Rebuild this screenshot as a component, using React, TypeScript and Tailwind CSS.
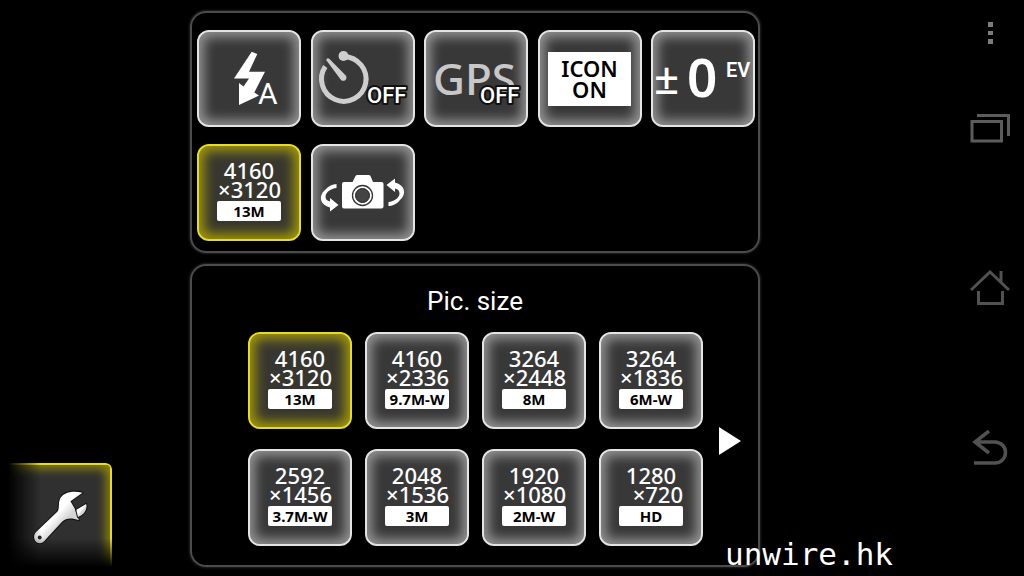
import type { ReactNode } from 'react';
import clsx from 'clsx';

type PicSize = { width: string; height: string; label: string };

const picSizes: PicSize[] = [
  { width: '4160', height: '3120', label: '13M' },
  { width: '4160', height: '2336', label: '9.7M-W' },
  { width: '3264', height: '2448', label: '8M' },
  { width: '3264', height: '1836', label: '6M-W' },
  { width: '2592', height: '1456', label: '3.7M-W' },
  { width: '2048', height: '1536', label: '3M' },
  { width: '1920', height: '1080', label: '2M-W' },
  { width: '1280', height: '720', label: 'HD' },
];

const ROBOTO = 'Roboto, sans-serif';
const SANS = '"Noto Sans", "Open Sans", sans-serif';

const Tile = ({ name, active, children }: { name: string; active?: boolean; children: ReactNode }) => (
  <button
    type="button"
    aria-label={name}
    aria-pressed={!!active}
    className={clsx(
      'flex h-[97px] w-[104px] items-center justify-center rounded-xl border-2',
      active
        ? 'border-[#e6dc28] bg-[#38372f] shadow-[inset_0_0_12px_5px_#a1980a]'
        : 'border-[#e4e4e4] bg-[#383838] shadow-[inset_0_0_12px_5px_#949494]'
    )}
  >
    {children}
  </button>
);

const SizeTile = ({ size, active }: { size: PicSize; active?: boolean }) => (
  <Tile name={`${size.width}×${size.height} ${size.label}`} active={active}>
    <span className="flex w-16 flex-col pb-[3px] font-['Noto_Sans','Open_Sans',sans-serif] text-[22px] leading-[19px] font-medium text-white">
      <span className="text-center">{size.width}</span>
      <span className="flex justify-end">×{size.height}</span>
      <span className="mt-0.5 h-5 rounded-xs bg-white text-center text-[15px] leading-5 font-bold text-black">
        {size.label}
      </span>
    </span>
  </Tile>
);

const OffText = () => (
  <text
    x="54"
    y="71"
    fill="#fff"
    stroke="#111"
    strokeWidth="4"
    strokeLinejoin="round"
    paintOrder="stroke"
    fontFamily={ROBOTO}
    fontSize="22"
    fontWeight="500"
  >
    OFF
  </text>
);

const FlashIcon = () => (
  <svg viewBox="0 0 100 93" className="h-full w-full" fill="#fff">
    <path d="M52.7 19.7 58.3 22 50 39.7H66L55.3 60.5 60 63.5 40 73V51L44.5 54.5 50 46.5H35Z" />
    <text x="59" y="72" fontFamily={ROBOTO} fontSize="30">A</text>
  </svg>
);

const TimerIcon = () => (
  <svg viewBox="0 0 100 93" className="h-full w-full">
    <path d="M31 24.7A22.3 22.3 0 1 1 12.3 34.5" fill="none" stroke="#cecece" strokeWidth="5" />
    <circle cx="30.5" cy="24" r="5" fill="#cecece" />
    <path d="M13.5 28.5 C13 26.5 15 25.5 16.5 27 L33 43.8 C34.8 47.5 31 50.3 28 48 Z" fill="#cecece" />
    <OffText />
  </svg>
);

const GpsIcon = () => (
  <svg viewBox="0 0 100 93" className="h-full w-full">
    <text x="7" y="63" fill="#c8c8c8" fontFamily={SANS} fontSize="44" fontWeight="500">GPS</text>
    <OffText />
  </svg>
);

const EvIcon = () => (
  <svg viewBox="0 0 100 93" className="h-full w-full" fill="#fff">
    <text x="1" y="62" fontFamily={SANS} fontSize="44" fontWeight="500">±</text>
    <text x="34" y="65" fontFamily={SANS} fontSize="53" fontWeight="600">0</text>
    <text x="73" y="45" fontFamily={ROBOTO} fontSize="20" fontWeight="600">EV</text>
  </svg>
);

const SwitchCameraIcon = () => {
  const arrow = 'M73.5 39 82 32.5V36.5C92 39 94 48 87 54 84 58 79 60 75.5 60V56C81 55.5 86 52 86.5 48 86.8 45 85 43 82 42.5V46Z';
  return (
    <svg viewBox="0 0 100 93" className="h-full w-full" fill="#fff">
      <path d="M31 36H39.5L42.5 30Q43 29 44.5 29H55.5Q57 29 57.5 30L60 36H68.5Q70.5 36 70.5 38V60.5Q70.5 62.5 68.5 62.5H31Q29 62.5 29 60.5V38Q29 36 31 36Z" />
      <circle cx="49.5" cy="49.5" r="10" stroke="#333" strokeWidth="1.3" />
      <circle cx="49.5" cy="49.5" r="7" fill="#444" stroke="#222" />
      <path d={arrow} />
      <path d={arrow} transform="rotate(180 49.5 49)" />
    </svg>
  );
};

const WrenchIcon = () => (
  <svg viewBox="24 39 312 312" className="h-full w-full">
    <defs>
      <linearGradient id="steel" x1="0" y1="0" x2="1" y2="1">
        <stop offset="45%" stopColor="#fff" />
        <stop offset="60%" stopColor="#d4d4d4" />
      </linearGradient>
    </defs>
    <g fill="url(#steel)" stroke="#111" strokeWidth="6" strokeLinejoin="round" paintOrder="stroke">
      <path d="M252 124C225 116 190 121 182 145 177 160 183 173 174 183L109 245C98 258 106 279 122 278 131 278 136 271 142 264L190 212C202 200 220 200 241 208L228 172 215 150Z" />
      <path d="M233 176 263 158C268 174 256 192 238 198Z" />
    </g>
    <circle cx="121" cy="261" r="6" fill="#222" />
  </svg>
);

const MenuIcon = () => (
  <svg viewBox="0 0 40 22" className="w-10" fill="#7c7c7c">
    <path d="M18 0h5v5h-5zM18 9h5v4h-5zM18 17h5v5h-5z" />
  </svg>
);

const RecentIcon = () => (
  <svg viewBox="0 0 40 30" className="w-10" fill="none" stroke="#5c5c5c" strokeWidth="3">
    <path d="M2 8.5H31.5V28H2ZM7 2.5H38.5V23" />
  </svg>
);

const HomeIcon = () => (
  <svg viewBox="0 0 40 36" className="w-10" fill="none" stroke="#525252" strokeWidth="3">
    <path d="M1 20 20 2 39 20M31 1V12M8.5 21V33.5H32.5V21" />
  </svg>
);

const BackIcon = () => (
  <svg viewBox="0 0 40 36" className="w-10" fill="none" stroke="#525252" strokeWidth="3.5">
    <path d="M19 1 5 12 19 23M5 12H25A10 10 0 0 1 25 33H4" />
  </svg>
);

const panel = 'rounded-2xl border-2 border-[#4c4c4c] shadow-[0_0_3px_#444]';

export default function App() {
  return (
    <div className="relative flex min-h-screen overflow-hidden bg-black text-white">
      <div className="flex w-[190px] flex-col justify-end pb-[9px] pl-2">
        <button
          type="button"
          aria-label="Settings"
          className="size-[104px] rounded-tr-md border-t-2 border-r-2 border-[#e6dc28] bg-[#303030] shadow-[inset_-6px_6px_10px_-2px_#8c8408] [mask-composite:intersect] [mask-image:linear-gradient(to_right,transparent,#000_32%),linear-gradient(to_top,transparent,#000_28%)]"
        >
          <WrenchIcon />
        </button>
      </div>

      <main className="flex flex-1 flex-col gap-[11px] pt-[11px] pb-[9px]">
        <section
          className={clsx(panel, 'grid grid-cols-[repeat(5,104px)] justify-between gap-y-[17px] pt-[17px] pr-[3px] pb-[10px] pl-[5px]')}
        >
          <Tile name="Flash auto"><FlashIcon /></Tile>
          <Tile name="Self timer off"><TimerIcon /></Tile>
          <Tile name="GPS off"><GpsIcon /></Tile>
          <Tile name="Icon on">
            <span className="flex h-[54px] w-[83px] flex-col justify-center bg-white text-center font-['Noto_Sans','Open_Sans',sans-serif] text-[22px] leading-[21px] font-semibold text-black">
              <span>ICON</span>
              <span>ON</span>
            </span>
          </Tile>
          <Tile name="Exposure"><EvIcon /></Tile>
          <SizeTile size={picSizes[0]} active />
          <Tile name="Switch camera"><SwitchCameraIcon /></Tile>
        </section>

        <section className={clsx(panel, 'flex flex-1 flex-col pt-5')}>
          <h2 className="text-center font-[Roboto,sans-serif] text-[26px] leading-[30px]">Pic. size</h2>
          <div className="flex items-center gap-4 pt-4 pl-14">
            <div className="grid grid-cols-4 gap-x-[13px] gap-y-5">
              {picSizes.map((size, i) => (
                <SizeTile key={size.label} size={size} active={i === 0} />
              ))}
            </div>
            <button type="button" aria-label="Next page" className="pt-1">
              <svg viewBox="0 0 22 28" className="h-7 w-[22px]" fill="#fff">
                <path d="M0 0 22 14 0 28Z" />
              </svg>
            </button>
          </div>
        </section>
      </main>

      <nav className="flex w-[264px] flex-col items-end pr-[14px]">
        <button type="button" aria-label="Menu" className="flex h-12 items-end pb-1"><MenuIcon /></button>
        <button type="button" aria-label="Recent apps" className="flex h-40 items-center"><RecentIcon /></button>
        <button type="button" aria-label="Home" className="flex h-40 items-center"><HomeIcon /></button>
        <button type="button" aria-label="Back" className="flex h-40 items-center"><BackIcon /></button>
      </nav>

      <span className="absolute right-[131px] bottom-1 font-['DejaVu_Sans_Mono',monospace] text-[31px] leading-9">
        unwire.hk
      </span>
    </div>
  );
}
